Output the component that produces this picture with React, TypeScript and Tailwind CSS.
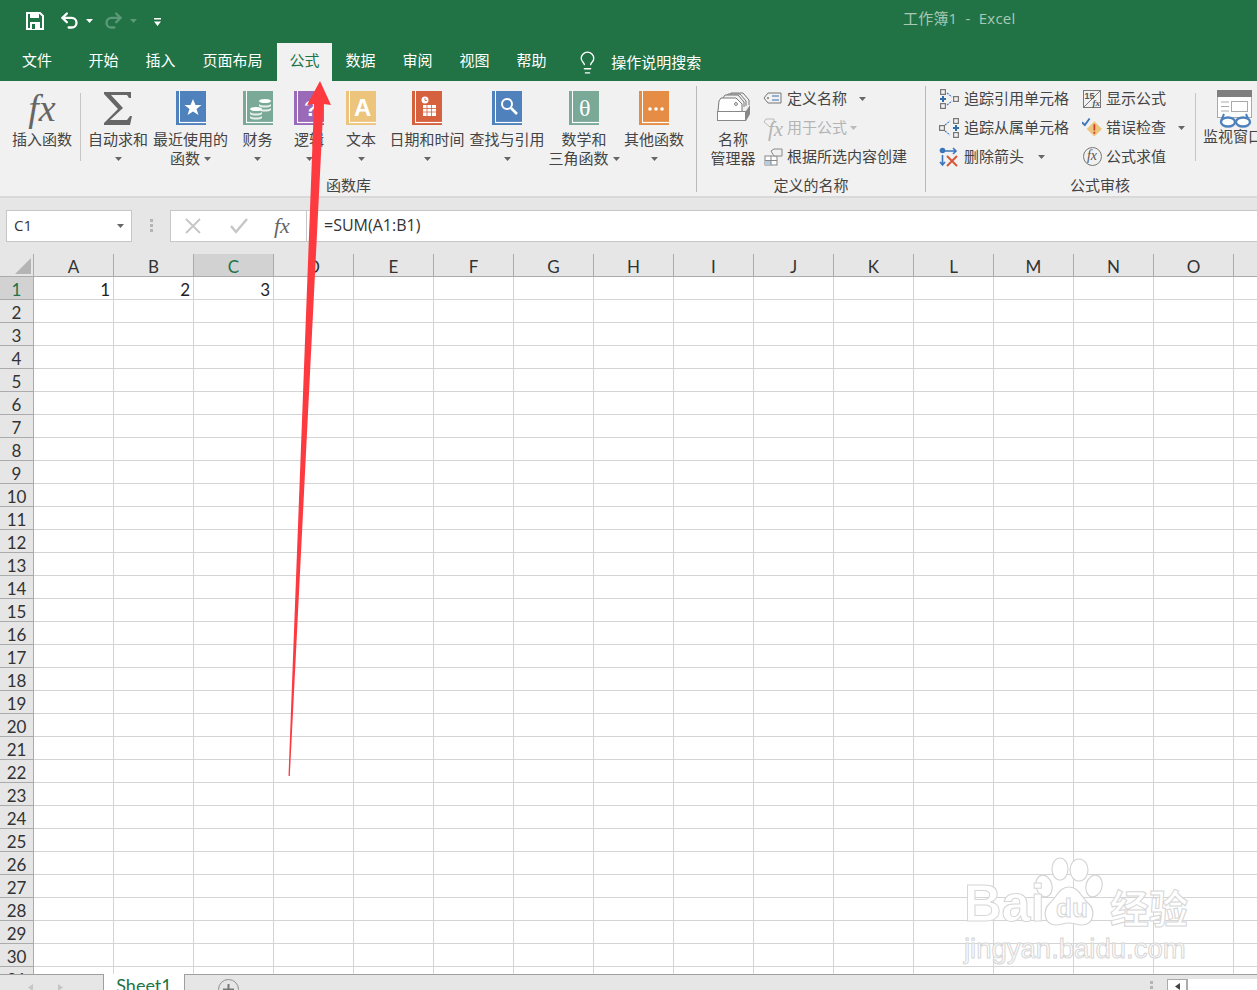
import React from 'react';
import { Undo2, Redo2, Lightbulb } from 'lucide-react';

const cjk = "font-['Open_Sans','Noto_Sans_CJK_SC',sans-serif]";
const cellFont = "font-['Lato','Noto_Sans',sans-serif]";

const columns = ['A', 'B', 'C', 'D', 'E', 'F', 'G', 'H', 'I', 'J', 'K', 'L', 'M', 'N', 'O', 'P'];
const rows = Array.from({ length: 31 }, (_, i) => i + 1);
const values: Record<string, string> = { A: '1', B: '2', C: '3' };

const Caret = ({ color = '#666' }: { color?: string }) => (
  <svg width="7" height="4" viewBox="0 0 7 4" className="inline-block shrink-0">
    <path d="M0 0h7L3.500 4z" fill={color} />
  </svg>
);

const Book = ({ color, children }: { color: string; children?: React.ReactNode }) => (
  <svg width="30" height="34" viewBox="0 0 30 34">
    <rect width="30" height="34" fill={color} />
    <rect x="3" y="0" width="1" height="31" fill="#fff" />
    <path d="M3 31.500h27" stroke="#fff" strokeWidth="1.200" />
    {children}
  </svg>
);

const RibbonButton = ({ w, label, second, caret, icon }: {
  w: string; label: string; second?: string; caret?: boolean; icon: React.ReactNode;
}) => (
  <div className={`${w} shrink-0 flex flex-col items-center`}>
    <div className="h-[34px] flex items-center justify-center">{icon}</div>
    <div className="mt-[5px] h-[19px] leading-[19px] whitespace-nowrap">{label}</div>
    <div className="h-[19px] leading-[19px] whitespace-nowrap flex items-center justify-center gap-[4px]">
      {second}
      {caret && <Caret />}
    </div>
  </div>
);

const SmallRow = ({ icon, label, caret, muted, gap = 'gap-[4px]' }: {
  icon: React.ReactNode; label: string; caret?: string; muted?: boolean; gap?: string;
}) => (
  <div className={`h-[29px] flex items-center ${gap} whitespace-nowrap ${muted ? 'text-[#b4b4b4]' : ''}`}>
    <div className="w-[20px] h-[22px] flex items-center justify-center shrink-0">{icon}</div>
    <span>{label}</span>
    {caret && <span className={caret}><Caret color={muted ? '#bbb' : '#666'} /></span>}
  </div>
);

const GroupDivider = () => <div className="w-px h-[106px] mt-[5px] bg-[#b9b9b9] shrink-0" />;

const TraceBoxes = ({ flip }: { flip?: boolean }) => (
  <svg width="20" height="20" viewBox="0 0 20 20" fill="none">
    <g stroke="#777" strokeWidth="1.200">
      {flip ? (
        <>
          <rect x="0.600" y="7.600" width="4.800" height="4.800" />
          <rect x="14.600" y="0.600" width="4.800" height="4.800" />
          <rect x="14.600" y="14.600" width="4.800" height="4.800" />
        </>
      ) : (
        <>
          <rect x="1.600" y="0.600" width="4.800" height="4.800" />
          <rect x="1.600" y="14.600" width="4.800" height="4.800" />
          <rect x="14.600" y="7.600" width="4.800" height="4.800" />
        </>
      )}
    </g>
    <path d={flip ? 'M6 7l5-4M6 13l5 4' : 'M8 4l5 4M8 16l5-4'} stroke="#4a7ebb" strokeWidth="1.200" strokeDasharray="2 1" />
    <path d={flip ? 'M17 7v6M14 10h6' : 'M4 7v6M1 10h6'} stroke="#2f6ead" strokeWidth="2" />
  </svg>
);

const NameManagerIcon = () => (
  <svg width="36" height="34" viewBox="0 0 36 34" fill="none" stroke="#777" strokeWidth="1">
    <path d="M14 5l2-3h12l6 7v5" fill="#f1f1f1" />
    <path d="M11 6l2-3h12l6 7v5" fill="#f1f1f1" />
    <path d="M8 7l2-3h13l6 7v5" fill="#f1f1f1" />
    <path d="M3 20l1-10 2-3h15l6 6 0 7" fill="#fff" />
    <circle cx="21" cy="13" r="1.400" />
    <rect x="2.500" y="20.500" width="28" height="9" fill="#fff" stroke="#888" />
    <path d="M31 20l4-6v9l-4 7z" fill="#888" stroke="none" />
  </svg>
);

const WatchIcon = () => (
  <svg width="38" height="38" viewBox="0 0 38 38" fill="none">
    <rect x="1.500" y="0.500" width="34" height="27" fill="#fff" stroke="#aaa" />
    <rect x="1" y="0" width="35" height="7" fill="#7f7f7f" />
    <rect x="15.500" y="11.500" width="16" height="10" stroke="#aaa" />
    <path d="M5 12h8M5 16.500h8M5 21h8" stroke="#aaa" />
    <path d="M5 31l3-7M33 31l-3-7" stroke="#4f81bd" strokeWidth="2" />
    <ellipse cx="12" cy="32" rx="7" ry="4.500" fill="#fff" stroke="#4f81bd" strokeWidth="2.400" />
    <ellipse cx="27" cy="32" rx="7" ry="4.500" fill="#fff" stroke="#4f81bd" strokeWidth="2.400" />
  </svg>
);

const FxGlyph = ({ size, color = '#666' }: { size: string; color?: string }) => (
  <span className={`font-['Liberation_Serif',serif] italic leading-none ${size}`} style={{ color }}>fx</span>
);

const BaiduMark = () => (
  <div className="absolute left-[964px] top-[854px] w-[230px] h-[112px] pointer-events-none">
    <svg width="90" height="80" viewBox="0 0 90 80" fill="#fff" stroke="#d5d5d5" strokeWidth="1.200" className="absolute left-[60px] top-0">
      <ellipse cx="36" cy="15" rx="8" ry="11" />
      <ellipse cx="55" cy="16" rx="9" ry="11" />
      <ellipse cx="20" cy="32" rx="8" ry="11" transform="rotate(-15 20 32)" />
      <ellipse cx="70" cy="32" rx="8" ry="11" transform="rotate(15 70 32)" />
      <path d="M45 33c10 0 12 10 19 16 8 7 6 22-6 22-5 0-8-2-13-2s-8 2-13 2c-12 0-14-15-6-22 7-6 9-16 19-16z" />
    </svg>
    <div className="absolute left-0 top-[21px] font-['Liberation_Sans',sans-serif] font-bold text-[52px] leading-[56px] text-white [-webkit-text-stroke:1px_#d6d6d6]">Bai</div>
    <div className="absolute left-[92px] top-[40px] font-['Liberation_Sans',sans-serif] font-bold text-[26px] leading-[28px] text-white [-webkit-text-stroke:1px_#d6d6d6]">du</div>
    <div className="absolute left-[146px] top-[30px] font-['Noto_Sans_CJK_SC',sans-serif] font-bold text-[39px] leading-[44px] text-white [-webkit-text-stroke:1px_#d6d6d6]">经验</div>
    <div className="absolute left-0 top-[80px] font-['Liberation_Sans',sans-serif] text-[27.500px] leading-[30px] text-white [-webkit-text-stroke:1px_#d6d6d6] whitespace-nowrap">jingyan.baidu.com</div>
  </div>
);

const RedArrow = () => (
  <svg width="1257" height="990" className="absolute inset-0 pointer-events-none">
    <polygon points="320,81 331,105 323.500,104 289.800,776 288.500,776 314,104 307,105" fill="#fc3a40" />
  </svg>
);

export default function App() {
  return (
    <div className={`relative w-[1257px] h-[990px] overflow-hidden bg-white flex flex-col text-[15px] text-[#444] ${cjk}`}>
      {/* Title bar */}
      <div className="h-[43px] bg-[#217346] flex items-center pb-[2px] shrink-0 text-white">
        <div className="ml-[26px] w-[18px] flex items-center">
          <svg width="18" height="18" viewBox="0 0 18 18" fill="none">
            <path d="M1 1h13l3 3v13H1z" stroke="#fff" strokeWidth="2" />
            <rect x="4" y="1" width="9" height="5" fill="#fff" />
            <rect x="4" y="10" width="10" height="7" fill="#fff" />
            <rect x="6" y="12" width="3" height="5" fill="#217346" />
          </svg>
        </div>
        <Undo2 size={21} strokeWidth={2.600} className="ml-[15px]" />
        <span className="ml-[6px] flex"><Caret color="#fff" /></span>
        <Redo2 size={21} strokeWidth={2.600} color="#5c9a79" className="ml-[10px]" />
        <span className="ml-[6px] flex"><Caret color="#5c9a79" /></span>
        <svg width="7" height="8" viewBox="0 0 7 8" className="ml-[17px] mt-[3px]">
          <path d="M0 0h7v1.500H0zM0 3.500h7L3.500 8z" fill="#fff" />
        </svg>
        <span className="ml-[742px] mb-[4px] text-[#a7c9b6] tracking-[0.200px] whitespace-pre">工作簿1  -  Excel</span>
      </div>

      {/* Tabs */}
      <div className="h-[38px] bg-[#217346] flex items-stretch gap-[2px] shrink-0 text-white">
        <div className="w-[74px] pl-[22px] leading-[35px]">文件</div>
        {['开始', '插入', '页面布局'].map(t => (
          <div key={t} className="px-[12.500px] leading-[35px]">{t}</div>
        ))}
        <div className="px-[12.500px] leading-[35px] bg-[#f1f1f1] text-[#217346]">公式</div>
        <div className="flex items-stretch gap-[2px] -ml-[1px]">
          {['数据', '审阅', '视图', '帮助'].map(t => (
            <div key={t} className="px-[12.500px] leading-[35px]">{t}</div>
          ))}
        </div>
        <div className="ml-[14px] flex items-center">
          <Lightbulb size={25} strokeWidth={1.300} className="mt-[1px]" />
          <span className="ml-[11px] leading-[35px]">操作说明搜索</span>
        </div>
      </div>

      {/* Ribbon */}
      <div className="h-[117px] bg-[#f1f1f1] border-b-2 border-[#d9d9d9] flex items-start shrink-0 overflow-hidden pl-[4px] text-[#444]">
        {/* 函数库 */}
        <div className="w-[689px] shrink-0 flex flex-col h-[115px]">
          <div className="flex items-start pt-[10px] h-[96px]">
            <RibbonButton w="w-[76px]" label="插入函数" icon={<FxGlyph size="text-[38px]" />} />
            <div className="w-px h-[68px] mt-[2px] bg-[#c6c6c6]" />
            <RibbonButton w="w-[74px]" label="自动求和" caret icon={
              <svg width="30" height="34" viewBox="0 0 30 34"><path d="M1 1h27v6h-2l-2-3H8l12 13L7 29h17l3-4h2l-2 9H1v-2l14-14L1 3z" fill="#666" /></svg>
            } />
            <RibbonButton w="w-[71px]" label="最近使用的" second="函数" caret icon={
              <Book color="#4f81bd"><path d="M17 8l2.500 6h6l-5 4 2 6-5.500-3.600L11.500 24l2-6-5-4h6z" fill="#fff" /></Book>
            } />
            <RibbonButton w="w-[63px]" label="财务" caret icon={
              <Book color="#7aa998">
                <ellipse cx="22" cy="10" rx="6" ry="2" fill="#fff" />
                <path d="M16 13c2 2 10 2 12 0v2c-2 2-10 2-12 0zM16 17c2 2 10 2 12 0v2c-2 2-10 2-12 0z" fill="#e7f0ec" />
                <ellipse cx="13" cy="18" rx="6" ry="2" fill="#fff" />
                <path d="M7 21c2 2 10 2 12 0v2c-2 2-10 2-12 0zM7 25c2 2 10 2 12 0v2c-2 2-10 2-12 0z" fill="#e7f0ec" />
              </Book>
            } />
            <RibbonButton w="w-[40px]" label="逻辑" caret icon={
              <Book color="#9a6ab8">
                <text x="10" y="25" fill="#fff" fontSize="22" fontWeight="700" fontFamily="Liberation Sans">?</text>
              </Book>
            } />
            <RibbonButton w="w-[64px]" label="文本" caret icon={
              <Book color="#edc47b">
                <text x="8" y="25" fill="#fff" fontSize="24" fontWeight="700" fontFamily="Liberation Sans">A</text>
              </Book>
            } />
            <RibbonButton w="w-[68px]" label="日期和时间" caret icon={
              <Book color="#d6613f">
                <circle cx="13" cy="9" r="3.500" fill="#fff" />
                <path d="M13 7v2.500h2" stroke="#d6613f" strokeWidth="0.800" fill="none" />
                <path d="M11 14h13v11H11z" fill="#fff" />
                <path d="M11 17.500h13M11 21h13M15 14v11M19.500 14v11" stroke="#d6613f" strokeWidth="0.800" />
              </Book>
            } />
            <RibbonButton w="w-[92px]" label="查找与引用" caret icon={
              <Book color="#4f81bd">
                <circle cx="15" cy="13" r="5" fill="none" stroke="#fff" strokeWidth="2" />
                <path d="M19 17l6 6" stroke="#fff" strokeWidth="2.600" />
              </Book>
            } />
            <RibbonButton w="w-[62px]" label="数学和" second="三角函数" caret icon={
              <Book color="#7aa998">
                <text x="10" y="25" fill="#fff" fontSize="24" fontFamily="Liberation Serif">θ</text>
              </Book>
            } />
            <RibbonButton w="w-[78px]" label="其他函数" caret icon={
              <Book color="#e68d45">
                <circle cx="11" cy="18" r="1.800" fill="#fff" />
                <circle cx="17" cy="18" r="1.800" fill="#fff" />
                <circle cx="23" cy="18" r="1.800" fill="#fff" />
              </Book>
            } />
          </div>
          <div className="text-center leading-[20px] -mt-[2px]">函数库</div>
        </div>
        <div className="w-[3px] shrink-0" />
        <GroupDivider />

        {/* 定义的名称 */}
        <div className="w-[228px] shrink-0 flex flex-col h-[115px]">
          <div className="flex items-start h-[96px] pl-[6px]">
            <RibbonButton w="w-[60px] pt-[10px]" label="名称" second="管理器" icon={<NameManagerIcon />} />
            <div className="pt-[3px]">
              <SmallRow label="定义名称" caret="ml-[8px] flex" icon={
                <svg width="20" height="16" viewBox="0 0 20 16" fill="none">
                  <path d="M5 2h13v10H5L1 7z" stroke="#777" />
                  <circle cx="5" cy="7" r="1" fill="#777" />
                  <path d="M9 5h7M9 9h7" stroke="#3d6fb0" />
                </svg>
              } />
              <SmallRow muted label="用于公式" caret="-ml-[1px] flex" icon={
                <span className="relative block w-[20px] h-[20px]">
                  <svg width="12" height="10" viewBox="0 0 12 10" fill="none" className="absolute left-0 top-0"><path d="M3 1h8v4L7 9 1 4z" stroke="#bbb" /></svg>
                  <span className="absolute left-[5px] top-[1px] flex"><FxGlyph size="text-[21px]" color="#b4b4b4" /></span>
                </span>
              } />
              <SmallRow label="根据所选内容创建" icon={
                <svg width="19" height="18" viewBox="0 0 19 18" fill="none">
                  <rect x="1" y="8" width="12" height="9" fill="#fff" stroke="#888" />
                  <rect x="1" y="12.500" width="6" height="4.500" fill="#b9cbe0" />
                  <path d="M1 12.500h12M7 8v9" stroke="#888" />
                  <path d="M7 3l3-2h8v7h-8z" fill="#f1f1f1" stroke="#888" />
                </svg>
              } />
            </div>
          </div>
          <div className="text-center leading-[20px] -mt-[2px]">定义的名称</div>
        </div>
        <GroupDivider />

        {/* 公式审核 */}
        <div className="w-[348px] shrink-0 flex flex-col h-[115px]">
          <div className="flex items-start h-[96px] pl-[13px] pt-[3px]">
            <div className="w-[143px] shrink-0">
              <SmallRow gap="gap-[5px]" label="追踪引用单元格" icon={<TraceBoxes />} />
              <SmallRow gap="gap-[5px]" label="追踪从属单元格" icon={<TraceBoxes flip />} />
              <SmallRow gap="gap-[5px]" label="删除箭头" caret="ml-[9px] flex" icon={
                <svg width="20" height="20" viewBox="0 0 20 20" fill="none">
                  <circle cx="3.500" cy="3.500" r="2.800" fill="#3d76b8" />
                  <path d="M6 4h11M14 1l3 3-3 3M3.500 8v10M1 15l2.500 3L6 15" stroke="#3d76b8" strokeWidth="1.600" />
                  <path d="M8 9l10 10M18 9L8 19" stroke="#d9573a" strokeWidth="2" />
                </svg>
              } />
            </div>
            <div className="w-[113px] shrink-0">
              <SmallRow label="显示公式" icon={
                <svg width="20" height="20" viewBox="0 0 20 20" fill="none">
                  <rect x="1.500" y="1.500" width="17" height="17" stroke="#777" />
                  <path d="M1.500 18.500l17-17" stroke="#777" />
                  <text x="2.500" y="10" fontSize="9" fontWeight="700" fill="#555" fontFamily="Liberation Sans">15</text>
                  <text x="10.500" y="17" fontSize="9" fontWeight="700" fontStyle="italic" fill="#555" fontFamily="Liberation Serif">fx</text>
                </svg>
              } />
              <SmallRow label="错误检查" caret="ml-[8px] flex" icon={
                <svg width="21" height="22" viewBox="0 0 21 22" fill="none">
                  <path d="M0 5l3 3 5-7" stroke="#3d76b8" strokeWidth="2" />
                  <path d="M13 4l8 8-8 8-8-8z" fill="#edc47b" />
                  <path d="M13 7v6.500M13 15v2" stroke="#c8402c" strokeWidth="1.800" />
                </svg>
              } />
              <SmallRow label="公式求值" icon={
                <span className="w-[19px] h-[19px] rounded-full border border-[#777] flex items-center justify-center pb-[1px]">
                  <FxGlyph size="text-[14px]" color="#555" />
                </span>
              } />
            </div>
            <div className="w-px h-[68px] mt-[9px] bg-[#c6c6c6] shrink-0" />
            <div className="ml-[7px] flex flex-col pt-[6px] whitespace-nowrap">
              <div className="ml-[13px] h-[39px]"><WatchIcon /></div>
              <div className="leading-[19px] -mt-[2px]">监视窗口</div>
            </div>
          </div>
          <div className="text-center leading-[20px] -mt-[2px]">公式审核</div>
        </div>
      </div>

      {/* Formula bar */}
      <div className="h-[56px] bg-[#e6e6e6] flex items-start pt-[12px] shrink-0">
        <div className="ml-[6px] w-[126px] h-[32px] bg-white border border-[#c6c6c6] flex items-center justify-between pl-[7px] pr-[7px] pb-[1px] text-[#333]">
          <span>C1</span>
          <Caret />
        </div>
        <div className="ml-[18px] mt-[9px] w-[3px] flex flex-col gap-[2px]">
          <span className="h-[3px] bg-[#b4b4b4]" />
          <span className="h-[3px] bg-[#b4b4b4]" />
          <span className="h-[3px] bg-[#b4b4b4]" />
        </div>
        <div className="ml-[17px] w-[137px] h-[32px] bg-white border border-[#c6c6c6] flex items-center pl-[14px]">
          <svg width="16" height="16" viewBox="0 0 16 16" fill="none"><path d="M1 1l14 14M15 1L1 15" stroke="#c6c6c6" strokeWidth="1.800" /></svg>
          <svg width="18" height="16" viewBox="0 0 18 16" fill="none" className="ml-[29px]"><path d="M1 8l5 6L17 1" stroke="#c6c6c6" strokeWidth="2.400" /></svg>
          <span className="ml-[26px] flex"><FxGlyph size="text-[22px]" /></span>
        </div>
        <div className="flex-1 h-[32px] bg-white border-y border-[#c6c6c6] flex items-center pl-[17px] pb-[3px] text-[16px] text-[#333]">=SUM(A1:B1)</div>
      </div>

      {/* Sheet grid */}
      <div className="flex-1 overflow-hidden">
        <div className={`grid grid-cols-[34px_repeat(16,80px)] auto-rows-[23px] w-[1314px] text-[17px] leading-[26px] text-[#222] ${cellFont}`}>
          <div className="bg-[#e6e6e6] border-r border-b border-[#ababab] relative">
            <svg width="16" height="16" viewBox="0 0 16 16" className="absolute right-[2px] bottom-[2px]"><path d="M16 0v16H0z" fill="#b4b4b4" /></svg>
          </div>
          {columns.map(c => (
            <div key={c} className={`border-r border-b border-[#ababab] text-center ${c === 'C' ? 'bg-[#d2d2d2] text-[#217346]' : 'bg-[#e6e6e6] text-[#333]'}`}>{c}</div>
          ))}
          {rows.map(r => (
            <React.Fragment key={r}>
              <div className={`border-r border-b border-[#ababab] text-center overflow-hidden ${r === 1 ? 'bg-[#d2d2d2] text-[#217346]' : 'bg-[#e6e6e6] text-[#333]'}`}>{r}</div>
              {columns.map(c => (
                <div key={c} className="border-r border-b border-[#d4d4d4] text-right pr-[3px] overflow-hidden">{r === 1 ? values[c] : ''}</div>
              ))}
            </React.Fragment>
          ))}
        </div>
      </div>

      {/* Sheet tabs */}
      <div className="h-[16px] bg-[#e6e6e6] border-t border-[#9f9f9f] flex shrink-0">
        <div className="w-[104px] flex items-start pl-[28px] gap-[25px] pt-[9px] shrink-0 border-r border-[#9f9f9f]">
          <svg width="5" height="7" viewBox="0 0 5 7"><path d="M5 0v7L0 3.500z" fill="#c6c6c6" /></svg>
          <svg width="5" height="7" viewBox="0 0 5 7"><path d="M0 0v7l5-3.500z" fill="#c6c6c6" /></svg>
        </div>
        <div className={`w-[81px] h-[16px] -mt-px bg-white text-[#217346] text-[18px] leading-[22px] text-center shrink-0 border-r border-[#9f9f9f] ${cellFont}`}>Sheet1</div>
        <div className="ml-[33px] mt-[4px] w-[21px] h-[21px] rounded-full border border-[#8f8f8f] flex justify-center shrink-0">
          <svg width="11" height="11" viewBox="0 0 11 11" className="mt-[4px]"><path d="M5.500 0v11M0 5.500h11" stroke="#777" strokeWidth="2" /></svg>
        </div>
        <div className="ml-[911px] mt-[6px] w-[3px] flex flex-col gap-[2px] shrink-0">
          <span className="h-[3px] bg-[#b4b4b4]" />
          <span className="h-[3px] bg-[#b4b4b4]" />
        </div>
        <div className="ml-[14px] mt-[4px] w-[20px] h-[16px] bg-white border border-[#ababab] flex justify-center pt-[3px] shrink-0">
          <svg width="5" height="7" viewBox="0 0 5 7"><path d="M5 0v7L0 3.500z" fill="#444" /></svg>
        </div>
        <div className="mt-[4px] flex-1 h-[16px] bg-white border-l border-[#ababab]" />
      </div>

      <BaiduMark />
      <RedArrow />
    </div>
  );
}
